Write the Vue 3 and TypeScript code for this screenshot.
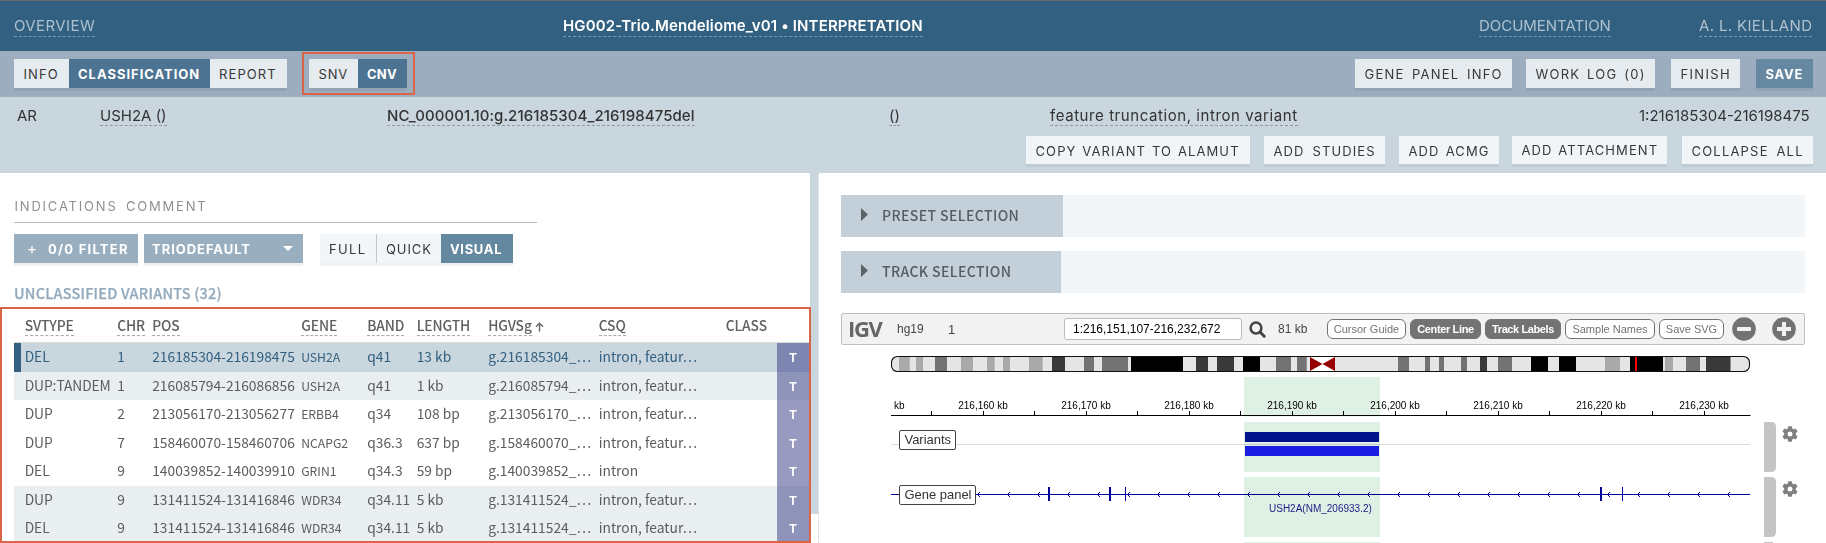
<script setup lang="ts">
interface Variant {
  svtype: string
  chr: string
  pos: string
  gene: string
  band: string
  length: string
  hgvsg: string
  csq: string
  state: string
}

const columns = [
  { key: 'svtype', label: 'SVTYPE', link: true },
  { key: 'chr', label: 'CHR', link: true },
  { key: 'pos', label: 'POS', link: true },
  { key: 'gene', label: 'GENE', link: true },
  { key: 'band', label: 'BAND', link: true },
  { key: 'length', label: 'LENGTH', link: true },
  { key: 'hgvsg', label: 'HGVSg', link: true },
  { key: 'csq', label: 'CSQ', link: true },
  { key: 'class', label: 'CLASS', link: false },
]

const row = (
  svtype: string, chr: string, pos: string, gene: string, band: string,
  length: string, csq: string, state: string,
): Variant => ({
  svtype, chr, pos, gene, band, length, csq, state,
  hgvsg: `g.${pos.split('-')[0]}_…`,
})

const variants: Variant[] = [
  row('DEL', '1', '216185304-216198475', 'USH2A', 'q41', '13 kb', 'intron, featur…', 'selected'),
  row('DUP:TANDEM', '1', '216085794-216086856', 'USH2A', 'q41', '1 kb', 'intron, featur…', 'tinted'),
  row('DUP', '2', '213056170-213056277', 'ERBB4', 'q34', '108 bp', 'intron, featur…', ''),
  row('DUP', '7', '158460070-158460706', 'NCAPG2', 'q36.3', '637 bp', 'intron, featur…', ''),
  row('DEL', '9', '140039852-140039910', 'GRIN1', 'q34.3', '59 bp', 'intron', ''),
  row('DUP', '9', '131411524-131416846', 'WDR34', 'q34.11', '5 kb', 'intron, featur…', 'tinted'),
  row('DEL', '9', '131411524-131416846', 'WDR34', 'q34.11', '5 kb', 'intron, featur…', 'tinted'),
]

const actions = [
  { name: 'copy', label: 'COPY VARIANT TO ALAMUT' },
  { name: 'studies', label: 'ADD STUDIES' },
  { name: 'acmg', label: 'ADD ACMG' },
  { name: 'attach', label: 'ADD ATTACHMENT' },
  { name: 'collapse', label: 'COLLAPSE ALL' },
]

// Cytobands: [start, end, fill], relative to the left edge of the tracks
const bands: [number, number, string][] = [
  [8, 18.7, '#aaa'], [25, 32, '#aaa'], [44, 56, '#737373'], [70, 82, '#aaa'],
  [96, 103.7, '#aaa'], [112, 119, '#aaa'], [138, 151.7, '#aaa'], [161, 174, '#393939'],
  [193, 203, '#737373'], [211, 237, '#737373'], [240, 292, '#000'], [305, 317, '#393939'],
  [326, 343, '#393939'], [352, 369, '#000'], [385, 400, '#737373'], [406, 415.7, '#737373'],
  [507, 518, '#737373'], [534, 539, '#737373'], [548, 553, '#737373'], [570, 576, '#737373'],
  [589, 596, '#393939'], [607, 621, '#737373'], [640, 657, '#000'], [668, 685, '#000'],
  [714, 729, '#aaa'], [739, 772, '#000'], [774, 782, '#aaa'], [795, 809, '#737373'],
  [815, 839.5, '#393939'],
]

const majorTicks = Array.from({ length: 8 }, (_, i) => ({
  x: 92 + i * 103,
  label: `216,${160 + i * 10} kb`,
}))
const minorTicks = Array.from({ length: 8 }, (_, i) => 40 + i * 103)
const strandMarks = Array.from({ length: 26 }, (_, i) => 86.5 + i * 30)
const exons: [number, number][] = [[157, 2], [218, 2], [234, 1], [709, 2], [731, 1]]
const gearTeeth = [0, 60, 120, 180, 240, 300]
</script>

<template>
  <div class="app">
    <header class="top">
      <a class="link overview">OVERVIEW</a>
      <a class="link title">HG002-Trio.Mendeliome_v01 • INTERPRETATION</a>
      <a class="link docs">DOCUMENTATION</a>
      <a class="link user">A. L. KIELLAND</a>
    </header>

    <nav class="bar">
      <div class="tabs">
        <button class="tab info">INFO</button>
        <button class="tab on classification">CLASSIFICATION</button>
        <button class="tab report">REPORT</button>
      </div>
      <div class="tabs kinds">
        <button class="tab snv">SNV</button>
        <button class="tab on cnv">CNV</button>
        <span class="ring"></span>
      </div>
      <div class="tools">
        <button class="btn panel">GENE PANEL INFO</button>
        <button class="btn worklog">WORK LOG (0)</button>
        <button class="btn finish">FINISH</button>
        <button class="btn save">SAVE</button>
      </div>
    </nav>

    <section class="summary">
      <div class="facts">
        <span>AR</span>
        <span><a class="fact gene-name">USH2A ()</a></span>
        <span><a class="fact hgvs">NC_000001.10:g.216185304_216198475del</a></span>
        <span><a class="fact">()</a></span>
        <span><a class="fact csq-name">feature truncation, intron variant</a></span>
        <span class="range">1:216185304-216198475</span>
      </div>
      <div class="actions">
        <button v-for="a in actions" :key="a.name" class="btn pale" :class="a.name">{{ a.label }}</button>
      </div>
    </section>

    <main class="panes">
      <aside class="left">
        <div class="comment">INDICATIONS COMMENT</div>
        <div class="filters">
          <button class="btn blue filter"><span class="plus">+</span>0/0 FILTER</button>
          <button class="btn blue preset">
            TRIODEFAULT
            <svg class="caret" width="10" height="5" viewBox="0 0 10 5"><path d="M0 0H10L5 5Z" fill="#fff" /></svg>
          </button>
          <div class="modes">
            <button class="mode full">FULL</button>
            <button class="mode quick">QUICK</button>
            <button class="mode visual">VISUAL</button>
          </div>
        </div>
        <h2 class="heading">UNCLASSIFIED VARIANTS (32)</h2>
        <div class="table">
          <div class="head">
            <span v-for="c in columns" :key="c.key" :class="'c-' + c.key">
              <a :class="{ sort: c.link }">{{ c.label }}</a>
              <svg v-if="c.key === 'hgvsg'" class="arrow" width="9" height="10" viewBox="0 0 9 10">
                <path d="M4.5 9.5V1.2M1 4.7L4.5 1.2L8 4.7" fill="none" stroke="#666" stroke-width="1.4" />
              </svg>
            </span>
          </div>
          <div v-for="(v, i) in variants" :key="i" class="row" :class="v.state">
            <span class="c-svtype">{{ v.svtype }}</span>
            <span>{{ v.chr }}</span>
            <span>{{ v.pos }}</span>
            <span class="c-gene">{{ v.gene }}</span>
            <span>{{ v.band }}</span>
            <span>{{ v.length }}</span>
            <span>{{ v.hgvsg }}</span>
            <span>{{ v.csq }}</span>
            <span></span>
            <span class="tag">T</span>
          </div>
          <span class="frame"></span>
        </div>
      </aside>

      <div class="divider"><div class="thumb"></div></div>

      <section class="right">
        <div class="fold"><div class="fold-tab"><i class="tri"></i>PRESET SELECTION</div></div>
        <div class="fold"><div class="fold-tab short"><i class="tri"></i>TRACK SELECTION</div></div>

        <div class="igv">
          <span class="logo">IGV</span>
          <span class="genome">hg19</span>
          <span class="chrom">1</span>
          <span class="locus">1:216,151,107-216,232,672</span>
          <svg class="search" width="17" height="17" viewBox="0 0 17 17">
            <circle cx="7" cy="7" r="5.4" fill="none" stroke="#444" stroke-width="2.5" />
            <path d="M11 11L15.2 15.2" stroke="#444" stroke-width="3" stroke-linecap="round" />
          </svg>
          <span class="size">81 kb</span>
          <div class="pills">
            <span class="pill cursor">Cursor Guide</span>
            <span class="pill dark center">Center Line</span>
            <span class="pill dark labels">Track Labels</span>
            <span class="pill names">Sample Names</span>
            <span class="pill svg">Save SVG</span>
          </div>
          <svg class="zoom" width="24" height="24" viewBox="0 0 24 24">
            <circle cx="12" cy="12" r="11.8" fill="#737373" />
            <rect x="5" y="10" width="14" height="4" rx="1" fill="#f2f2f2" />
          </svg>
          <svg class="zoom in" width="24" height="24" viewBox="0 0 24 24">
            <circle cx="12" cy="12" r="11.8" fill="#737373" />
            <path d="M10 5h4v5h5v4h-5v5h-4v-5h-5v-4h5z" fill="#f2f2f2" />
          </svg>
        </div>

        <svg class="tracks" width="935" height="198" viewBox="0 0 935 198">
          <defs>
            <clipPath id="chromosome"><rect x="0" y="11.5" width="859" height="15" rx="6" /></clipPath>
          </defs>
          <g clip-path="url(#chromosome)">
            <rect x="0" y="11" width="859" height="16" fill="#e5e5e5" />
            <rect v-for="b in bands" :key="b[0]" :x="b[0]" y="11" :width="b[1] - b[0]" height="16" :fill="b[2]" />
            <rect x="419" y="11" width="25" height="16" fill="#fff" />
          </g>
          <path d="M419 12V26L431.5 19ZM444 12V26L431.5 19Z" fill="#960000" />
          <rect x="0.5" y="11.5" width="858" height="15" rx="6" fill="none" stroke="#111" stroke-width="1.1" />
          <rect x="744" y="12" width="2" height="14" fill="#f00" />

          <g class="ruler">
            <text x="3" y="64">kb</text>
            <text v-for="t in majorTicks" :key="t.x" :x="t.x" y="64" text-anchor="middle">{{ t.label }}</text>
            <rect x="0" y="70" width="859.5" height="1" />
            <rect v-for="t in majorTicks" :key="'M' + t.x" :x="t.x" y="66" width="1" height="5" />
            <rect v-for="x in minorTicks" :key="x" :x="x" y="66" width="1" height="5" />
          </g>

          <rect x="0" y="99" width="859" height="1" fill="#ddd" />
          <rect x="354" y="87" width="134" height="10" fill="#001199" />
          <rect x="354" y="101" width="134" height="10" fill="#201efc" />

          <g fill="none" stroke="#000096">
            <path d="M0 149.5H859" />
            <path v-for="x in strandMarks" :key="x" :d="`M${x + 2.5} 147L${x} 149.5L${x + 2.5} 152`" />
          </g>
          <rect v-for="e in exons" :key="e[0]" :x="e[0]" y="142" :width="e[1]" height="14" fill="#000096" />
          <text class="gene" x="378" y="167">USH2A(NM_206933.2)</text>

          <g class="roi">
            <rect x="353" y="32" width="136" height="39.5" />
            <rect x="353" y="77" width="136" height="50" />
            <rect x="353" y="132" width="136" height="60" />
            <rect x="353" y="197" width="136" height="2" />
          </g>

          <g class="label">
            <rect x="8.5" y="85.5" width="56" height="19" rx="1.5" />
            <text x="13.5" y="99" textLength="46.5">Variants</text>
            <rect x="8.5" y="140.5" width="76" height="19" rx="1.5" />
            <text x="13.5" y="154" textLength="67">Gene panel</text>
          </g>

          <g fill="#c4c4c4">
            <path d="M873 77h7q5 0 5 5v40q0 5 -5 5h-7z" />
            <path d="M873 132h7q5 0 5 5v50q0 5 -5 5h-7z" />
            <rect x="873" y="197" width="9" height="1" />
          </g>
          <g v-for="y in [89, 144]" :key="y" :transform="`translate(899 ${y})`">
            <rect v-for="a in gearTeeth" :key="a" x="-2.1" y="-7.7" width="4.2" height="5" rx="0.8" fill="#808080" :transform="`rotate(${a})`" />
            <circle r="4.2" fill="none" stroke="#808080" stroke-width="3.4" />
          </g>
        </svg>
      </section>
    </main>
  </div>
</template>

<style>
body {
  margin: 0;
  overflow: hidden;
}
</style>

<style scoped>
.app {
  box-sizing: border-box;
  width: 1826px;
  height: 543px;
  overflow: hidden;
  background: #fff;
  font-family: Inter, 'Liberation Sans', sans-serif;
  color: #333;
  white-space: nowrap;
}
.app * {
  box-sizing: border-box;
}
button {
  font: 400 13px Inter, sans-serif;
  color: #383838;
  border: 0;
  padding: 0 0 0 9.5px;
  text-align: left;
  white-space: nowrap;
  height: 29px;
  flex: none;
}

.top {
  height: 51px;
  border-top: 1px solid #686868;
  background: #326081;
  display: grid;
  grid-template-columns: 549px 916px 220px 114px;
  padding: 15px 0 0 14px;
  align-items: start;
}
.link {
  justify-self: start;
  height: 21px;
  line-height: 19px;
  font-size: 15px;
  color: #adc0ce;
  border-bottom: 1px dashed #7c98ad;
}
.overview { letter-spacing: 0.4px; }
.title { color: #fff; font-weight: 600; letter-spacing: 0.14px; }
.docs { letter-spacing: -0.03px; }
.user { letter-spacing: 0.35px; }

.bar {
  height: 46px;
  background: #9dadc0;
  display: flex;
  align-items: flex-start;
  padding: 8px 13px 0 14px;
}
.tabs {
  display: flex;
  position: relative;
  box-shadow: 0 3px #93a3b3;
}
.kinds { margin-left: 22px; }
.tab { background: #e6ebef; }
.tab.on { background: #4c7391; color: #fff; font-weight: 700; padding-left: 9px; }
.info { width: 55px; letter-spacing: 1.1px; }
.classification { width: 141px; letter-spacing: 0.98px; }
.report { width: 77px; letter-spacing: 1.1px; padding-left: 9px; }
.snv { width: 49px; letter-spacing: 0.8px; }
.cnv { width: 49px; letter-spacing: 0.2px; }
.ring {
  position: absolute;
  inset: -7px -8px -7px -7px;
  border: 2px solid #d96446;
}
.tools { display: flex; margin-left: auto; }
.btn { background: #e6ebef; box-shadow: 0 3px #93a3b3; padding-top: 1px; }
.panel { width: 157px; letter-spacing: 1.2px; word-spacing: 2.8px; }
.worklog { width: 129px; margin-left: 14px; letter-spacing: 1.2px; word-spacing: 2.1px; }
.finish { width: 69px; margin-left: 16px; letter-spacing: 1.35px; }
.save { width: 57px; margin-left: 16px; letter-spacing: 0.8px; background: #6788a1; color: #fff; font-weight: 700; }

.summary {
  height: 76px;
  background: #c9d6de;
}
.facts {
  display: grid;
  grid-template-columns: 83px 287px 502px 161px 589px 180px;
  padding: 10px 0 0 17px;
  height: 39px;
  font-size: 15px;
  line-height: 18px;
}
.fact {
  display: inline-block;
  height: 19px;
  border-bottom: 1px dashed #8e9ba4;
}
.hgvs { font-weight: 500; letter-spacing: 0.06px; }
.csq-name { letter-spacing: 0.57px; }
.actions {
  display: flex;
  justify-content: flex-end;
  padding-right: 13px;
}
.pale { height: 28px; background: #f1f5f8; box-shadow: 0 3px #bfccd4; }
.copy { width: 224px; letter-spacing: 1.1px; word-spacing: 1.1px; }
.studies { width: 121px; margin-left: 14px; letter-spacing: 1.1px; word-spacing: 3.2px; }
.acmg { width: 100px; margin-left: 14px; letter-spacing: 1.1px; word-spacing: 1.4px; }
.attach { width: 155px; margin-left: 13px; letter-spacing: 1.1px; word-spacing: 1px; padding-top: 0; padding-bottom: 1px; }
.collapse { width: 131px; margin-left: 15px; letter-spacing: 1.2px; word-spacing: 2.9px; }

.panes { display: flex; height: 370px; }
.left { width: 810px; flex: none; }
.comment {
  width: 523px;
  height: 50px;
  margin-left: 14px;
  padding: 24px 0 0 0.5px;
  border-bottom: 1px solid #b8b8b8;
  font-size: 13px;
  line-height: 18px;
  letter-spacing: 1.8px;
  word-spacing: 3px;
  color: #909090;
}
.filters { display: flex; margin: 11px 0 0 14px; }
.blue { background: #99afbf; color: #fff; font-weight: 700; box-shadow: 0 3px #f1f1f1; }
.filter { width: 124px; letter-spacing: 1.25px; padding-left: 13px; }
.plus { display: inline-block; width: 21px; font-size: 15px; font-weight: 400; line-height: 14px; }
.preset {
  width: 159px;
  margin-left: 6px;
  padding: 1px 10px 0 8px;
  letter-spacing: 0.96px;
  display: flex;
  align-items: center;
  justify-content: space-between;
}
.caret { margin-top: -1px; }
.modes { display: flex; margin-left: 17px; box-shadow: 0 3px #f1f1f1; }
.mode { background: #f2f6f9; padding-left: 9px; }
.full { width: 57px; letter-spacing: 1.32px; border-right: 1px solid #bccbd5; }
.quick { width: 64px; letter-spacing: 0.92px; }
.visual { width: 72px; letter-spacing: 0.66px; background: #64889f; color: #fff; font-weight: 700; }

.heading {
  margin: 18px 0 0 14px;
  height: 26px;
  font: 500 14.5px/24px 'Noto Sans CJK JP', sans-serif;
  letter-spacing: 0.2px;
  color: #94abbe;
  -webkit-text-stroke: 0.25px #94abbe;
}
.table {
  position: relative;
  height: 236px;
  font-family: 'Noto Sans CJK JP', sans-serif;
  font-size: 13.8px;
}
.head,
.row {
  display: grid;
  grid-template-columns: 92.5px 35px 149px 66px 49.5px 71.5px 110.5px 127px 51.3px 32px;
  padding-left: 10.7px;
  margin: 0 1px 0 14px;
}
.head {
  height: 36px;
  padding-top: 7px;
  border-bottom: 1px solid #dcdcdc;
  font-weight: 500;
  color: #606060;
  line-height: 22px;
  letter-spacing: -0.1px;
}
.head a { display: inline-block; height: 22px; vertical-align: top; }
.sort { border-bottom: 1px dashed #aaa; }
.arrow { margin: 8px 0 0 3px; vertical-align: top; }
.row {
  height: 28.57px;
  line-height: 27.9px;
  color: #5c5c5c;
}
.selected { background: #c9d6de; color: #326081; box-shadow: inset 7px 0 #326081; }
.tinted { background: #e9eef1; }
.row .c-svtype { letter-spacing: -0.08px; }
.row .c-gene { font-size: 12.2px; line-height: 28.5px; }
.tag {
  background: #989abf;
  color: #fff;
  font: 700 12px/29px Inter, sans-serif;
  text-align: center;
}
.selected .tag { background: #7d86b0; }
.tinted .tag { background: #8e93b9; }
.frame {
  position: absolute;
  inset: 0 -1px 0 0;
  border: 2px solid #d96446;
}

.divider {
  width: 9px;
  flex: none;
  border-right: 1px dotted #c3cdd4;
}
.thumb { height: 341px; background: #c9d6de; }

.right { padding: 22px 0 0 22px; width: 1007px; }
.fold {
  width: 964px;
  height: 42px;
  margin-bottom: 14px;
  background: #f2f6f9;
}
.fold-tab {
  width: 222px;
  height: 42px;
  padding: 0 0 3px 20px;
  display: flex;
  align-items: center;
  background: #c3d0d9;
  color: #565d61;
  font: 500 14px/20px 'Noto Sans CJK JP', sans-serif;
  letter-spacing: 0.4px;
}
.short { width: 220px; }
.tri {
  width: 7px;
  height: 13px;
  margin: 0 14px 0 0;
  background: #5c6367;
  clip-path: polygon(0 0, 100% 50%, 0 100%);
}

.igv {
  width: 964px;
  height: 32px;
  margin-top: 20px;
  border: 1px solid #bfbfbf;
  border-radius: 2px;
  background: #f2f2f2;
  display: flex;
  align-items: center;
  font: 12px 'Liberation Sans', Arial, sans-serif;
  color: #444;
}
.logo {
  width: 49px;
  margin-left: 6px;
  padding-bottom: 2px;
  font: 700 22px/28px 'Open Sans', sans-serif;
  letter-spacing: -1.3px;
  color: #666;
}
.genome { width: 51px; }
.chrom { width: 116px; font-size: 13px; }
.locus {
  width: 178px;
  height: 22px;
  padding-left: 8px;
  line-height: 20px;
  background: #fff;
  border: 1px solid #bbb;
  border-radius: 3px;
  color: #000;
}
.search { margin-left: 7px; }
.size { margin-left: 12px; width: 49px; }
.pills { display: flex; gap: 4px; font-size: 11px; }
.pill {
  height: 20px;
  line-height: 19px;
  border: 1px solid #737373;
  border-radius: 6px;
  text-align: center;
  background: #fff;
  color: #737373;
}
.pill.dark { background: #737373; color: #fff; font-weight: 700; }
.cursor { width: 79px; }
.center { width: 71px; letter-spacing: -0.35px; }
.labels { width: 76px; letter-spacing: -0.4px; }
.names { width: 90px; }
.svg { width: 65px; }
.zoom { margin-left: 7.5px; }
.zoom.in { margin-left: 16px; }

.tracks { display: block; margin-left: 50px; }
.tracks text { font-family: 'Liberation Sans', Arial, sans-serif; font-size: 10px; }
.ruler { fill: #000; }
.gene { fill: #1e1e96; }
.roi { fill: #dff1e5; mix-blend-mode: multiply; }
.label rect { fill: #fff; stroke: #444; }
.tracks .label text { font-size: 13px; fill: #333; }
</style>
